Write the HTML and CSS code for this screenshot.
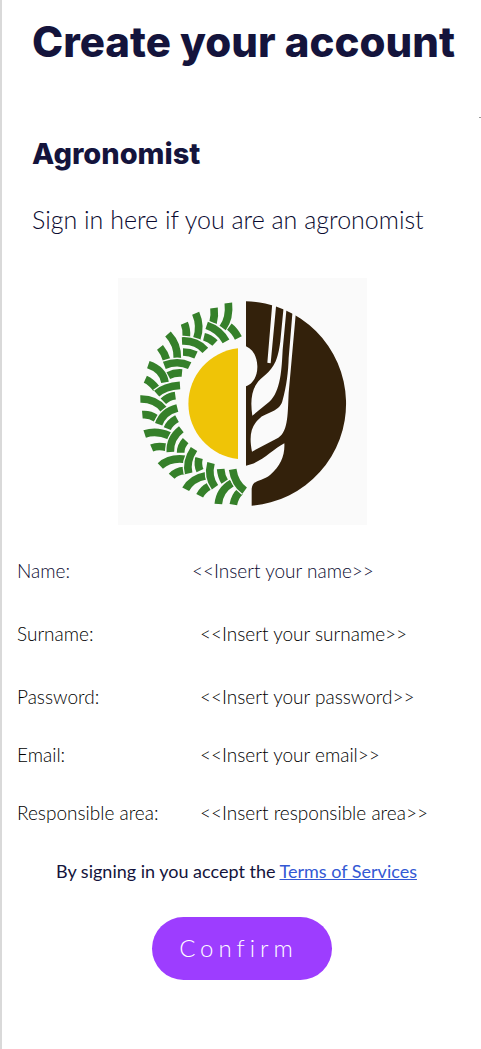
FILE: index.html
```html
<!DOCTYPE html>
<html lang="en">
<head>
<meta charset="utf-8">
<meta name="viewport" content="width=device-width, initial-scale=1">
<title>Create your account</title>
<link rel="stylesheet" href="styles.css">
</head>
<body>
<main class="page">
  <header class="intro">
    <h1 class="title">Create your account</h1>
    <div class="tick"></div>
    <h2 class="role">Agronomist</h2>
    <p class="lead">Sign in here if you are an agronomist</p>
  </header>

  <svg class="logo" viewBox="0 0 747 741" role="img" aria-label="Tractor tyre, sun and wheat emblem">
    <defs>
      <path id="spine" d="M266 142Q305 155 324 190M192 189Q235 187 262 217M139 262Q180 246 215 263M116 347Q140 325 186 322M122 439Q135 401 178 390M157 522Q155 481 190 454M212 586Q203 551 228 513M291 628Q268 596 279 555M380 638Q350 616 344 574"/>
    </defs>
    <rect width="747" height="741" fill="#fafafa"/>
    <g fill="none" stroke="#35802a" stroke-width="23">
      <path d="M331 75Q336 120 314 150M288 90Q291 112 285 135M334 146Q350 158 361 180M258 176Q275 180 291 195M233 106Q250 145 236 183M199 136Q207 155 205 177M195 222Q215 222 234 231M150 168Q180 200 178 242M126 208Q140 225 146 246M151 293Q170 283 192 285M91 260Q135 275 141 313M82 304Q100 312 115 332M136 370Q150 356 172 353M67 363Q112 362 137 394"/>
      <path transform="translate(0 366)" d="M73 44Q95 42 114 55M148 86Q155 68 177 56M80 102Q115 90 154 107M101 144Q120 136 144 142M188 158Q188 138 203 122M127 198Q155 172 202 178M161 229Q175 213 199 212M246 212Q238 195 243 174M203 268Q220 235 264 227M245 287Q255 268 275 258M320 245Q310 230 308 207M301 312Q305 270 342 249M346 314Q350 290 366 275"/>
      <use href="#spine" stroke="#fafafa" stroke-width="31"/>
      <use href="#spine"/>
    </g>
    <path fill="#efc407" d="M360 211A167 167 0 0 0 360 543Z"/>
    <g transform="translate(351 0)">
      <path fill="#33210b" d="M33 70A307 307 0 0 1 50 683V632C53 603 82 611 106 590C137 563 150 533 148 496C115 513 75 557 33 563V325C57 316 68 290 67 264C66 235 54 214 33 205Z"/>
      <path fill="#fafafa" d="M112 74L124 76L107 256L97 254ZM146 86L155 88L143 215C140 270 138 340 103 371L52 413C47 380 47 345 63 320C80 293 105 289 122 250C131 228 134 205 136 190ZM173 96L183 100L161 345C158 400 161 460 130 479L51 521C43 480 44 445 76 419C98 402 132 402 142 370C155 325 160 280 161 240Z"/>
    </g>
  </svg>

  <form class="form">
    <div class="fields">
      <div class="field field--first">
        <label class="label" for="name">Name:</label>
        <input class="input" id="name" type="text" placeholder="&lt;&lt;Insert your name&gt;&gt;">
      </div>
      <div class="field">
        <label class="label" for="surname">Surname:</label>
        <input class="input" id="surname" type="text" placeholder="&lt;&lt;Insert your surname&gt;&gt;">
      </div>
      <div class="field">
        <label class="label" for="password">Password:</label>
        <input class="input" id="password" type="password" placeholder="&lt;&lt;Insert your password&gt;&gt;">
      </div>
    </div>
    <div class="field">
      <label class="label" for="email">Email:</label>
      <input class="input" id="email" type="email" placeholder="&lt;&lt;Insert your email&gt;&gt;">
    </div>
    <div class="field">
      <label class="label" for="area">Responsible area:</label>
      <input class="input" id="area" type="text" placeholder="&lt;&lt;Insert responsible area&gt;&gt;">
    </div>
    <p class="terms">By signing in you accept the <a class="link" href="#terms">Terms of Services</a></p>
    <button class="confirm" type="submit">Confirm</button>
  </form>
</main>
</body>
</html>
```
FILE: styles.css
```css
* {
  box-sizing: border-box;
}

body {
  margin: 0;
  background: #fff;
  color: #14143c;
  font-family: Lato, "Open Sans", sans-serif;
  font-size: 19px;
  font-weight: 300;
}

.page {
  display: flex;
  flex-direction: column;
  min-height: 100vh;
  padding-bottom: 40px;
  border-left: 2px solid #d9d9d9;
}

.intro {
  display: flex;
  flex-direction: column;
  padding: 16px 0 0 30px;
}

.title,
.role {
  margin: 0;
  font-family: Inter, sans-serif;
  font-weight: 800;
}

.title {
  font-size: 42px;
  line-height: 52px;
}

.tick {
  align-self: flex-end;
  width: 2px;
  height: 1px;
  margin: 49px 0 20px;
  background: #999;
}

.role {
  font-size: 29px;
  line-height: 32px;
}

.lead {
  margin: 33px 0 0;
  color: #0a0a30;
  font-size: 25px;
  line-height: 32px;
}

.logo {
  display: block;
  align-self: center;
  width: 249px;
  height: 247px;
  margin: 43px 0 0 2px;
}

.form {
  display: flex;
  flex-direction: column;
  gap: 34px;
  padding: 34px 15px 0;
}

.fields {
  display: flex;
  flex-direction: column;
  gap: 39px;
}

.field {
  display: grid;
  grid-template-columns: 183px 1fr;
  color: #000;
  line-height: 24px;
}

.field--first {
  grid-template-columns: 175px 1fr;
  color: #0a0a30;
}

.input {
  width: 100%;
  height: 24px;
  padding: 0;
  border: 0;
  background: none;
  color: inherit;
  font: inherit;
}

.input::placeholder {
  color: inherit;
  opacity: 1;
}

.terms {
  margin: 0 0 0 39px;
  font-size: 18px;
  font-weight: 400;
  line-height: 24px;
}

.link {
  color: #3358d4;
}

.confirm {
  align-self: center;
  width: 180px;
  height: 63px;
  padding: 0 6px 2px 0;
  border: 0;
  border-radius: 32px;
  background: #9d3dff;
  color: #fff;
  font: inherit;
  font-size: 24px;
  letter-spacing: 5px;
}
```
